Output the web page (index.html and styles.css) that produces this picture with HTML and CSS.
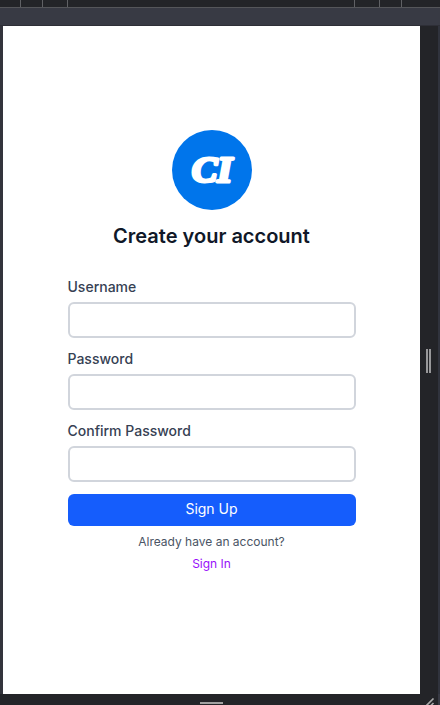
FILE: index.html
```html
<!DOCTYPE html>
<html lang="en">
<head>
<meta charset="utf-8">
<title>Create your account</title>
<link rel="stylesheet" href="styles.css">
</head>
<body>
<div class="ruler"><i class="cell c1"></i><i class="cell c2"></i><i class="cell c3"></i><i class="cell c4"></i><i class="cell c5"></i><i class="cell c6"></i></div>
<div class="gap"></div>
<div class="device">
  <main class="screen">
    <svg class="logo" viewBox="0 0 80 80" aria-label="CI">
      <circle cx="40" cy="40" r="40"/>
      <text x="19.8" y="52" textLength="40.5" lengthAdjust="spacingAndGlyphs">CI</text>
    </svg>
    <h1>Create your account</h1>
    <form>
      <label for="user">Username</label>
      <input id="user" type="text">
      <label for="pass">Password</label>
      <input id="pass" type="password">
      <label for="confirm">Confirm Password</label>
      <input id="confirm" type="password">
      <button type="button">Sign Up</button>
    </form>
    <p>Already have an account?</p>
    <a href="#">Sign In</a>
  </main>
  <div class="side"><span class="grip"></span></div>
</div>
<div class="bottom">
  <span class="handle"></span>
  <svg class="corner" viewBox="0 0 10 8"><path d="M0 8 7.5 .5M4.5 8 7.5 5"/></svg>
</div>
</body>
</html>
```
FILE: styles.css
```css
* { box-sizing: border-box; }
body {
  margin: 0;
  width: 440px;
  height: 705px;
  overflow: hidden;
  background: #232428;
  font-family: Inter, "Liberation Sans", sans-serif;
}
.ruler {
  display: flex;
  height: 8px;
  background: #232428;
  border-bottom: 1px solid #55565a;
}
.cell { border-right: 1px solid #606165; }
.c1 { width: 21px; }
.c2 { width: 22px; }
.c3 { width: 25px; }
.c4 { width: 287px; }
.c5 { width: 25px; }
.c6 { width: 22px; }
.gap {
  height: 18px;
  background: #383a44;
  border-bottom: 1px solid #2e2f37;
}
.device {
  display: flex;
  height: 668px;
  border-left: 3px solid #33343c;
}
.screen {
  display: flex;
  flex-direction: column;
  align-items: center;
  width: 417px;
  padding-top: 104px;
  background: #fff;
}
.logo { width: 80px; height: 80px; }
.logo circle { fill: #0075eb; }
.logo text {
  font: italic bold 35px "Liberation Serif", serif;
  fill: #fff;
  stroke: #fff;
  stroke-width: 3px;
  stroke-linejoin: round;
}
h1 {
  margin: 12px 0 0;
  font-size: 20px;
  line-height: 28px;
  font-weight: 600;
  color: #101828;
}
form {
  display: flex;
  flex-direction: column;
  width: 288px;
  margin-top: 27px;
}
label {
  height: 20px;
  margin-bottom: 5px;
  font-size: 14px;
  line-height: 20px;
  font-weight: 500;
  color: #364153;
}
input {
  height: 36px;
  margin: 0 0 11px;
  border: 2px solid #d1d5dc;
  border-radius: 6px;
  background: #fff;
}
button {
  height: 32px;
  margin-top: 1px;
  padding: 0 0 2px;
  border: 0;
  border-radius: 6px;
  background: #155dfc;
  color: #fff;
  font: 14px/20px Inter, sans-serif;
}
p {
  margin: 8px 0 0;
  font-size: 12px;
  line-height: 16px;
  color: #4a5565;
}
a {
  margin-top: 6px;
  font-size: 12px;
  line-height: 16px;
  color: #9810fa;
  text-decoration: none;
}
.side {
  display: flex;
  align-items: center;
  width: 20px;
  padding: 2px 0 0 6px;
  background: #232428;
  border-right: 2px solid #30333d;
}
.grip {
  width: 5px;
  height: 24px;
  border: solid #98989a;
  border-width: 0 2px;
}
.bottom {
  display: flex;
  height: 11px;
  background: #232428;
  border-right: 2px solid #383a44;
}
.handle {
  width: 23px;
  height: 2px;
  margin: 8px 0 0 200px;
  background: #a0a0a0;
}
.corner {
  width: 10px;
  height: 8px;
  margin: 4px 2px 0 auto;
  fill: none;
  stroke: #aaa;
  stroke-width: 1.6;
}
```
